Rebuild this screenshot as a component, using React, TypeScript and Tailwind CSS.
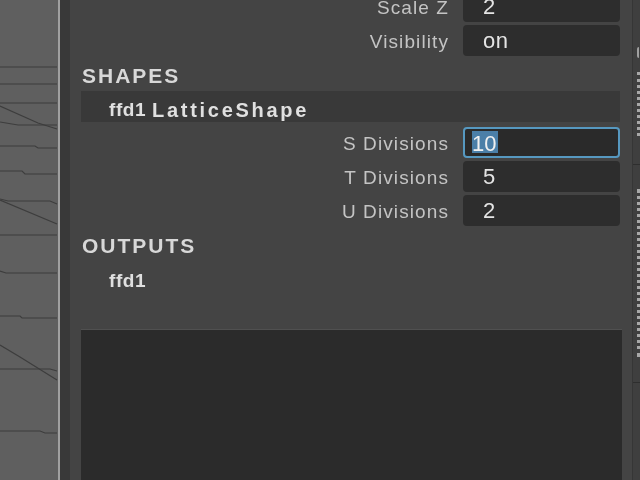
const linePaths = [
  "M0 67H57",
  "M0 84H57",
  "M0 103H57",
  "M0 106L38 123L57 129",
  "M0 122L18 125H57",
  "M0 146H35L38 148H57",
  "M0 171H22L25 174H57",
  "M0 199L8 201H50L57 204",
  "M0 200L57 224",
  "M0 235H57",
  "M0 271L6 273H57",
  "M0 316H20L22 318H57",
  "M0 345L20 357L57 380",
  "M0 369H50L57 371",
  "M0 431H40L45 433H57",
];

function Row({ label, value, focused }: { label: string; value: string; focused?: boolean }) {
  return (
    <div className="flex h-[34px] items-center justify-end">
      <span className="mr-[14px] pt-[5px] text-[19px] font-normal tracking-[1.1px] text-[#c4c4c4]">{label}</span>
      {focused ? (
        <div className="flex h-[31px] w-[157px] items-center rounded-[4px] border-2 border-[#5698c0] bg-[#2a2a2a] pl-[7px]">
          <span className="flex h-[22px] w-[26px] items-center bg-[#4b7fa8] pt-[2px] text-[22px] text-[#f0f0f0]">10</span>
        </div>
      ) : (
        <div className="flex h-[31px] w-[157px] items-center rounded-[4px] bg-[#2d2d2d] pl-[20px] pt-[1px] text-[22px] tracking-[0.5px] text-[#e4e4e4]">
          {value}
        </div>
      )}
    </div>
  );
}

function Heading({ children }: { children: string }) {
  return <div className="pl-[1px] text-[21px] font-bold leading-[24px] tracking-[2px] text-[#d8d8d8]">{children}</div>;
}

export default function App() {
  return (
    <div className="flex h-[480px] w-[640px] overflow-hidden bg-[#444444] font-['Liberation_Sans',sans-serif] blur-[0.6px]">
      <div className="h-full w-[58px] shrink-0 bg-[#5f5f5f]">
        <svg width="58" height="480" viewBox="0 0 58 480" fill="none" stroke="#3d3d3d" strokeWidth="1.2">
          {linePaths.map((d) => (
            <path key={d} d={d} />
          ))}
        </svg>
      </div>
      <div className="h-full w-[2px] shrink-0 bg-[#a0a0a0]" />
      <div className="h-full w-[10px] shrink-0 bg-[#393939]" />
      <div className="flex h-full w-[562px] shrink-0 flex-col pl-[11px] pr-[12px]">
        <div className="mt-[-11px]">
          <Row label="Scale Z" value="2" />
          <Row label="Visibility" value="on" />
        </div>
        <div className="mt-[7px]">
          <Heading>SHAPES</Heading>
        </div>
        <div className="mt-[3px] flex h-[31px] items-center bg-[#393939] pl-[28px] pt-[7px] text-[19px] font-bold tracking-[0.6px] text-[#e0e0e0]">
          ffd1&nbsp;<span className="text-[20px] tracking-[2.7px]">LatticeShape</span>
        </div>
        <div className="mt-[3px]">
          <Row label="S Divisions" value="10" focused />
          <Row label="T Divisions" value="5" />
          <Row label="U Divisions" value="2" />
        </div>
        <div className="mt-[7px]">
          <Heading>OUTPUTS</Heading>
        </div>
        <div className="mt-[11px] pl-[28px] text-[19px] font-bold leading-[24px] tracking-[0.6px] text-[#e0e0e0]">ffd1</div>
        <div className="mt-[36px] mr-[-2px] min-h-0 flex-1 border-t border-[#505050] bg-[#2b2b2b]" />
      </div>
      <div className="flex h-full w-[8px] shrink-0 flex-col items-end border-l border-[#363636] bg-[#3f3f3f]">
        <div className="mt-[47px] h-[11px] w-[3px] rounded-l-[2px] border-l-2 border-[#a0a0a0]" />
        <div className="mt-[14px] h-[64px] w-[3px] border-l-3 border-dotted border-[#a8a8a8]" />
        <div className="mt-[28px] h-[1px] w-full bg-[#2e2e2e]" />
        <div className="mt-[24px] h-[168px] w-[3px] border-l-3 border-dotted border-[#a8a8a8]" />
        <div className="mt-[25px] h-[1px] w-full bg-[#2e2e2e]" />
      </div>
    </div>
  );
}
